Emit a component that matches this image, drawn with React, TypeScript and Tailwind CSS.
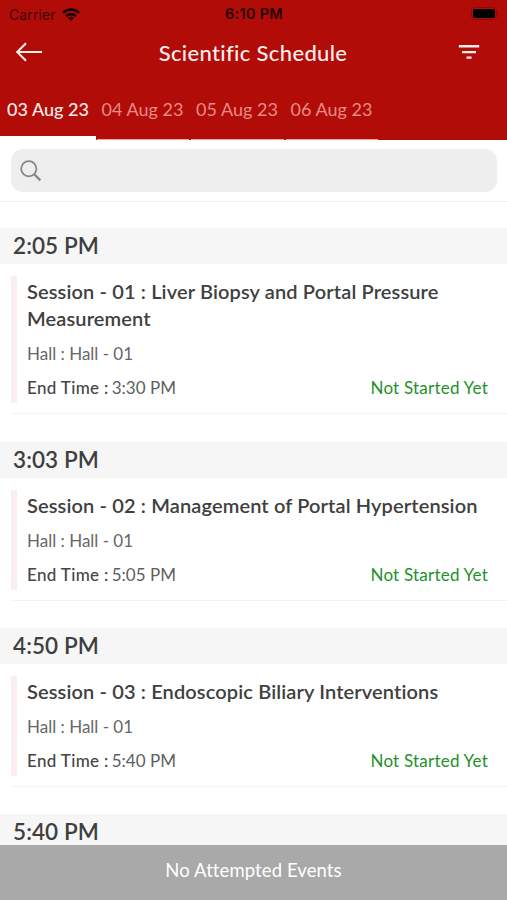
import clsx from "clsx";

type Session = {
  id: number;
  start: string;
  title: string[];
  hall: string;
  end: string;
  status: string;
};

const DAYS = ["03 Aug 23", "04 Aug 23", "05 Aug 23", "06 Aug 23"];

const SESSIONS: Session[] = [
  {
    id: 1,
    start: "2:05 PM",
    title: ["Session - 01 : Liver Biopsy and Portal Pressure", "Measurement"],
    hall: "Hall - 01",
    end: "3:30 PM",
    status: "Not Started Yet",
  },
  {
    id: 2,
    start: "3:03 PM",
    title: ["Session - 02 : Management of Portal Hypertension"],
    hall: "Hall - 01",
    end: "5:05 PM",
    status: "Not Started Yet",
  },
  {
    id: 3,
    start: "4:50 PM",
    title: ["Session - 03 : Endoscopic Biliary Interventions"],
    hall: "Hall - 01",
    end: "5:40 PM",
    status: "Not Started Yet",
  },
];

function StatusBar() {
  return (
    <div className="grid h-7 grid-cols-3 items-center pl-[9px] pr-[8px] font-['Inter',sans-serif] text-black">
      <div className="flex items-center gap-[6px] text-[14px] text-[#3a0000]">
        <span className="tracking-[0.1px]">Carrier</span>
        <svg width="18" height="13" viewBox="0 0 18 13" fill="none" stroke="#1a0000" strokeWidth="2.6">
          <path d="M1 4.8a11.3 11.3 0 0 1 16 0" />
          <path d="M4 8.2a7.1 7.1 0 0 1 10 0" />
          <path d="M9 13 6.2 10.2a4 4 0 0 1 5.6 0z" fill="#1a0000" stroke="none" />
        </svg>
      </div>
      <span className="whitespace-nowrap text-center text-[14.5px] font-semibold tracking-[0.3px] text-[#240000]">
        6:10 PM
      </span>
      <div className="flex justify-end">
        <svg width="28" height="14" viewBox="0 0 28 14">
          <rect x="0.5" y="0.5" width="25" height="12" rx="3.5" fill="none" stroke="#8f0806" />
          <rect x="2" y="2" width="22" height="9" rx="2" fill="#000" />
          <path d="M26.5 4.5c1.4.6 1.4 3.4 0 4z" fill="#8f0806" />
        </svg>
      </div>
    </div>
  );
}

function Header() {
  return (
    <header className="h-[140px] shrink-0 bg-[#b20c09]">
      <StatusBar />
      <div className="flex h-12 items-center justify-between pl-4 pr-[27px]">
        <svg width="27" height="20" viewBox="0 0 27 20" fill="none" stroke="#ffeeee" strokeWidth="2">
          <path d="M26 10H1.5M10 1.2 1.2 10l8.8 8.8" />
        </svg>
        <h1 className="whitespace-nowrap pl-[5px] text-[22px] font-medium tracking-[0.35px] text-[#fff0ee]">
          Scientific Schedule
        </h1>
        <svg width="22" height="16" viewBox="0 0 22 16" fill="#ffeeee">
          <path d="M.8 1h20.4v2.4H.8zM4 7h14v2.2H4zM8.5 12.4h5v2.4h-5z" />
        </svg>
      </div>
      <nav className="flex h-16">
        {DAYS.map((day, i) => (
          <div key={day} className="flex w-[94.5px] flex-col justify-between whitespace-nowrap">
            <span
              className={clsx(
                "pl-[7px] pt-[20px] text-[18px] leading-[26px] tracking-[0.02px]",
                i === 0 ? "font-medium text-[#fff0ee]" : "text-[#e98b86]"
              )}
            >
              {day}
            </span>
            <span
              className={clsx("block", i === 0 ? "h-1 w-[96px] bg-white" : "ml-[2px] h-px bg-[#eea29f]")}
            />
          </div>
        ))}
      </nav>
    </header>
  );
}

function SearchBar() {
  return (
    <div className="h-[62px] shrink-0 border-b border-[#f1f1f1] pl-[11px] pr-[10px] pt-[9px]">
      <div className="flex h-[43px] items-center rounded-xl bg-[#eeeeee] pl-[9px]">
        <svg width="22" height="22" viewBox="0 0 22 22" fill="none" stroke="#858585">
          <circle cx="8.8" cy="8.8" r="7.6" strokeWidth="1.7" />
          <path d="m14.2 14.2 6.2 6.2" strokeWidth="2.2" />
        </svg>
      </div>
    </div>
  );
}

function TimeHeading({ time }: { time: string }) {
  return (
    <h2 className="h-9 shrink-0 whitespace-nowrap bg-[#f6f6f6] pl-[13px] text-[22.5px] font-semibold leading-[35px] tracking-[0.1px] text-[#3f3f3f]">
      {time}
    </h2>
  );
}

function SessionCard({ session }: { session: Session }) {
  return (
    <section className="mb-[27.4px] shrink-0">
      <TimeHeading time={session.start} />
      <div className="ml-[11px] border-b border-[#f3f3f3] pb-[10px] pt-[12px]">
        <div className="border-l-[6px] border-[#fbeeee] pb-[2px] pl-[10px] pr-[20px] pt-[2px]">
          <h3 className="text-[20px] font-semibold leading-[27px] tracking-[0.13px] text-[#404040]">
            {session.title.map((line) => (
              <span key={line} className="block whitespace-nowrap">
                {line}
              </span>
            ))}
          </h3>
          <p className="mt-[9px] text-[17px] leading-[26px] text-[#666]">Hall : {session.hall}</p>
          <div className="mt-[8px] flex justify-between text-[17px] leading-[26px]">
            <p className="flex gap-[3px] text-[#5e5e5e]">
              <span className="font-medium tracking-[0.35px] text-[#454545]">End Time :</span>
              <span>{session.end}</span>
            </p>
            <p className="-mr-px tracking-[0.22px] text-[#22912a]">{session.status}</p>
          </div>
        </div>
      </div>
    </section>
  );
}

export default function App() {
  return (
    <main className="flex h-[900px] w-[507px] flex-col overflow-hidden bg-white font-['Lato',sans-serif]">
      <Header />
      <SearchBar />
      <div className="flex min-h-0 flex-1 flex-col pt-[26.2px]">
        {SESSIONS.map((s) => (
          <SessionCard key={s.id} session={s} />
        ))}
        <TimeHeading time="5:40 PM" />
      </div>
      <footer className="relative flex h-[55px] shrink-0 justify-center bg-[#a9a9a9] pt-[12px] text-[18.5px] leading-[26px] tracking-[0.1px] text-white">
        No Attempted Events
      </footer>
    </main>
  );
}
